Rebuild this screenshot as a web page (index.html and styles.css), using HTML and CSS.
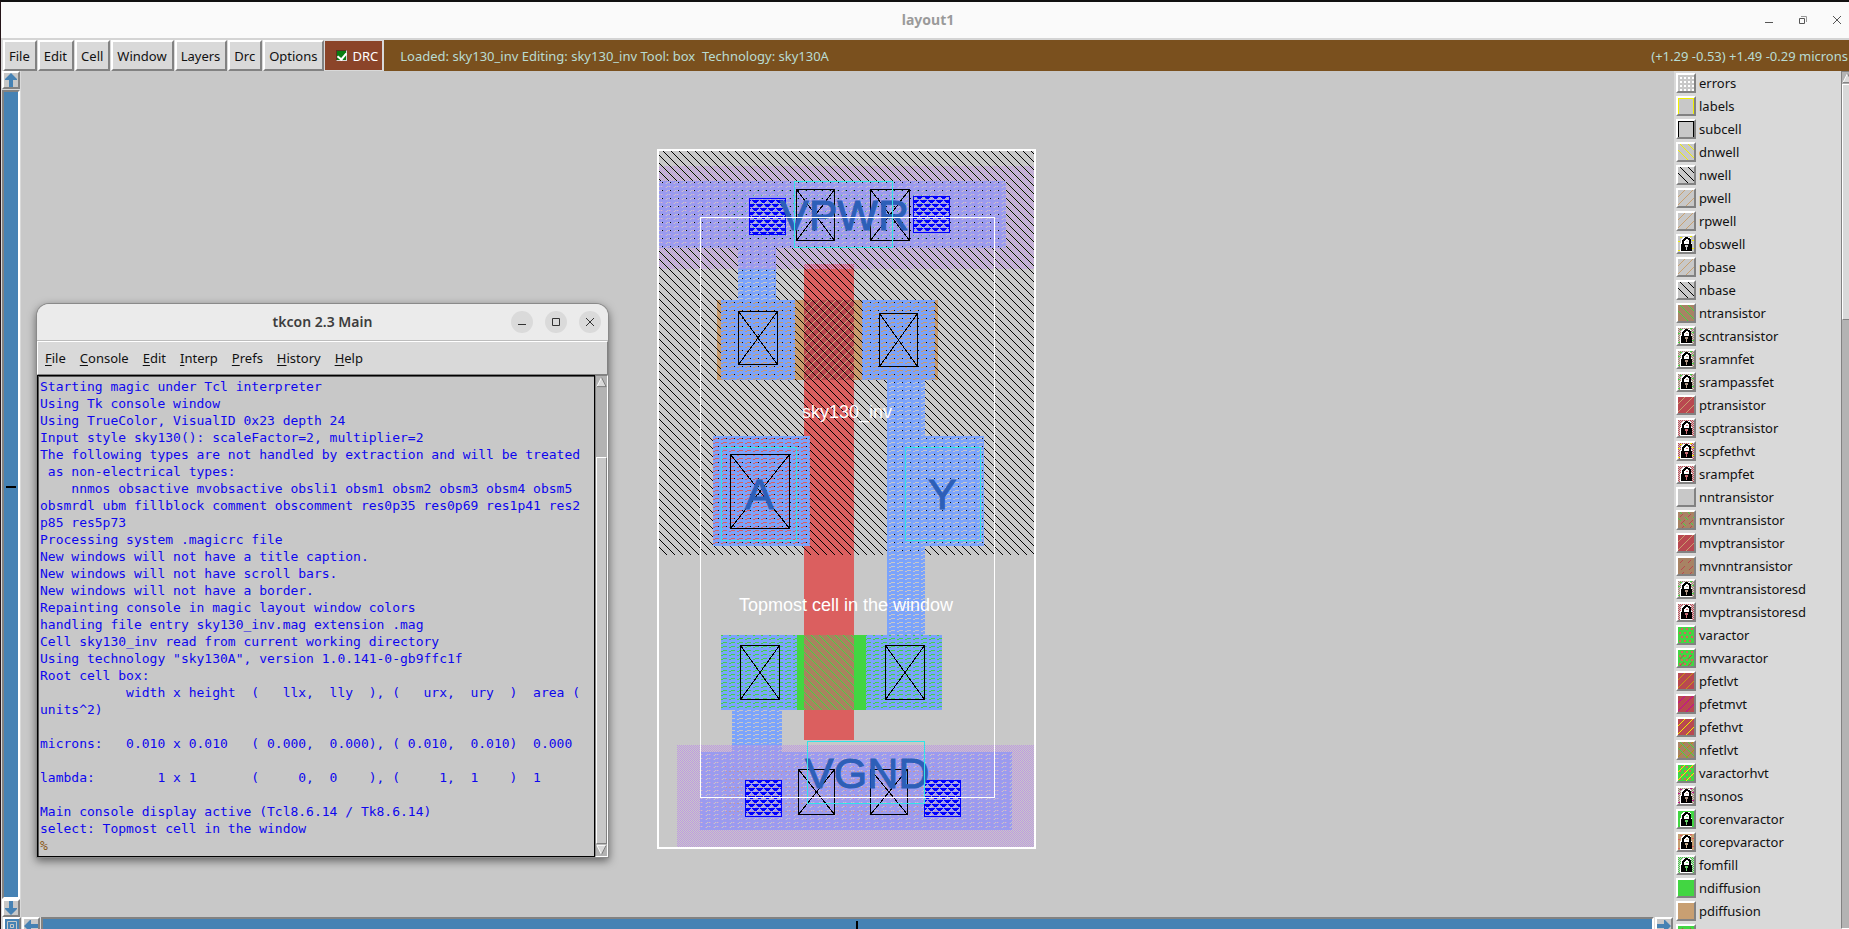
FILE: index.html
```html
<!DOCTYPE html>
<html lang="en">
<head>
<meta charset="utf-8">
<title>layout1</title>
<link rel="stylesheet" href="styles.css">
</head>
<body>
<svg class="defs" aria-hidden="true">
  <symbol id="back" viewBox="0 0 16 16"><path d="M2 0l14 14M10 0l6 6M0 6l10 10" stroke="currentColor"/></symbol>
  <symbol id="fwd" viewBox="0 0 16 16"><path d="M0 7l7-7M0 15l15-15M8 16l8-8" stroke="currentColor"/></symbol>
  <symbol id="cross" viewBox="0 0 16 16"><path d="M0 7l7-7M0 15l15-15M8 16l8-8" stroke="#b8900c"/><path d="M2 0l14 14M10 0l6 6M0 6l10 10" stroke="#42d642"/></symbol>
  <symbol id="mv" viewBox="0 0 16 16"><path d="M2 0l14 14M10 0l6 6M0 6l10 10" stroke="#42d642" stroke-dasharray="4 3"/><path d="M2 5l3-3M10 5l3-3M3 12l4-4M11 12l4-4M4 16l2-2M12 16l2-2" stroke="#b94850"/></symbol>
  <symbol id="mvn" viewBox="0 0 16 16"><path d="M2 5l3-3M10 5l3-3M3 12l4-4M11 12l4-4M4 16l2-2M12 16l2-2" stroke="#b94850"/></symbol>
  <symbol id="grid" viewBox="0 0 16 16"><path d="M2 3h14M2 7h14M2 11h14M2 15h14" stroke="#fff" stroke-width="2" stroke-dasharray="2 2"/></symbol>
  <symbol id="box" viewBox="0 0 16 16"><path d="M.5 16V.5h15V16" fill="none" stroke="currentColor"/></symbol>
  <symbol id="dots" viewBox="0 0 16 16"><path d="M3 2h13M1 6h15M3 10h13M1 14h15" stroke="#db5f5f" stroke-width="2" stroke-dasharray="2 3"/></symbol>
  <symbol id="dotsmv" viewBox="0 0 16 16"><path d="M3 2h13M1 6h15M3 10h13M1 14h15" stroke="#db5f5f" stroke-width="2" stroke-dasharray="2 3"/><path d="M2 9l4-4M10 9l4-4M2 16l4-4M10 16l4-4" stroke="#b94850"/></symbol>
  <symbol id="dotshvt" viewBox="0 0 16 16"><path d="M3 2h13M1 6h15M3 10h13M1 14h15" stroke="#db5f5f" stroke-width="2" stroke-dasharray="2 3"/><path d="M0 7l7-7M0 15l15-15M8 16l8-8" stroke="#f5f500"/></symbol>
  <symbol id="lock" viewBox="0 0 16 16">
    <path d="M0 .5h16M1 1.5h15M0 2.5h16M1 3.5h15M0 4.5h16M1 5.5h15M0 6.5h16M1 7.5h15M0 8.5h16M1 9.5h15M0 10.5h16M1 11.5h15M0 12.5h16M1 13.5h15M0 14.5h16M1 15.5h15" stroke="currentColor" stroke-dasharray="1 1"/>
    <path class="mark" d="M0 5h2M14 4h2M2 1h2M12 0h2M0 14h2M14 12h2"/>
    <path d="M2 16V7h1V3l2-2h6l2 2v4h1v9z" fill="#fff"/>
    <path d="M3 15V8h1V4l2-2h1V1h3v1h1l2 2v4h1v7zM6 8h5V5L9 3H8L6 5z" fill="#000" fill-rule="evenodd"/>
    <path d="M7 9h3v2H9v3H8v-3H7z" fill="#c8c8c8"/><path d="M7 9h3v2H9v3H8v-3H7zM8 5h2v1H8z" fill="currentColor" fill-opacity=".7"/>
  </symbol>
  <symbol id="arrow" viewBox="0 0 14 14"><path d="M7 0l6 6v1H9v7H5V7H1V6z" fill="#4682b4"/></symbol>
</svg>

<header class="titlebar">
  <h1>layout1</h1>
  <div class="winctl">
    <button aria-label="Minimize"><svg viewBox="0 0 12 12"><path d="M2 8.500h8" stroke="#555"/></svg></button>
    <button aria-label="Restore"><svg viewBox="0 0 12 12" fill="none"><path d="M4 2.500h5.500V8" stroke="#999"/><path d="M2.500 4.500h5v5h-5z" stroke="#555"/></svg></button>
    <button aria-label="Close"><svg viewBox="0 0 12 12"><path d="M2 2l8 8M10 2l-8 8" stroke="#555"/></svg></button>
  </div>
</header>

<nav class="toolbar">
  <button>File</button><button>Edit</button><button>Cell</button><button>Window</button><button>Layers</button><button>Drc</button><button>Options</button>
  <label class="drc"><input type="checkbox" checked>DRC</label>
  <p class="status"><span>Loaded: sky130_inv Editing: sky130_inv Tool: box&nbsp; Technology: sky130A</span><span>(+1.29 -0.53) +1.49 -0.29 microns</span></p>
</nav>

<main class="work">
  <div class="vbar">
    <button aria-label="Scroll up"><svg><use href="#arrow"/></svg></button>
    <div class="track"><i></i></div>
    <button aria-label="Scroll down"><svg class="down"><use href="#arrow"/></svg></button>
  </div>

  <section class="canvas">
    <svg class="cell" viewBox="657 149 379 700" width="379" height="700" role="img" aria-label="sky130_inv layout">
      <defs>
        <pattern id="hn" width="8" height="8" patternUnits="userSpaceOnUse"><path d="M0 0h1v1h1v1h1v1h1v1h1v1h1v1h1v1h1v1h-1v-1h-1v-1h-1v-1h-1v-1h-1v-1h-1v-1h-1v-1h-1z" fill="#000"/></pattern>
        <pattern id="hg" width="8" height="8" patternUnits="userSpaceOnUse"><path d="M0 0h1v1h1v1h1v1h1v1h1v1h1v1h1v1h1v1h-1v-1h-1v-1h-1v-1h-1v-1h-1v-1h-1v-1h-1v-1h-1z" fill="#42d642"/></pattern>
        <pattern id="ht" width="8" height="8" patternUnits="userSpaceOnUse"><path d="M8 0h-1v1h-1v1h-1v1h-1v1h-1v1h-1v1h-1v1h-1v1h1v-1h1v-1h1v-1h1v-1h1v-1h1v-1h1v-1h1z" fill="#d0a878"/></pattern>
        <pattern id="chk" width="2" height="2" patternUnits="userSpaceOnUse"><path d="M0 0h1v1H0zM1 1h1v1H1z" fill="#bf98e2"/></pattern>
        <pattern id="pchk" width="2" height="2" patternUnits="userSpaceOnUse"><path d="M1 0h1v1H1zM0 1h1v1H0z" fill="#db5f5f"/></pattern>
        <pattern id="li" width="8" height="4" patternUnits="userSpaceOnUse"><path d="M0 0h8v2H0zM0 2h3v1H0zM7 2h1v1H7zM0 3h1v1H0zM3 3h5v1H3z" fill="#7ba3fb"/></pattern>
        <pattern id="lm" width="8" height="4" patternUnits="userSpaceOnUse"><path d="M0 0h8v2H0zM0 2h3v1H0zM7 2h1v1H7zM0 3h1v1H0zM3 3h5v1H3z" fill="#9a9bef"/></pattern>
        <pattern id="gd" width="8" height="8" patternUnits="userSpaceOnUse"><path d="M1 3h1v1H1zM5 6h1v1H5z" fill="#55b87c"/></pattern>
        <pattern id="od" width="8" height="8" patternUnits="userSpaceOnUse"><path d="M1 3h2v1H1zM5 6h1v1H5zM6 3h1v1H6z" fill="#c89a98"/></pattern>
        <pattern id="tri" width="8" height="8" patternUnits="userSpaceOnUse"><path d="M0 0h7v1H6v1H5v1H2V2H1V1H0zM4 4h4v3H6V6H5V5H4zM0 4h3v1H2v1H1v1H0z" fill="#00f"/></pattern>
      </defs>
      <g shape-rendering="crispEdges">
        <rect x="717" y="300" width="221" height="80" fill="#c89c6e"/>
        <rect x="804" y="269" width="50" height="471" fill="#db5f5f"/>
        <rect x="713" y="436" width="97" height="110" fill="#db5f5f"/>
        <rect x="804" y="300" width="50" height="80" fill="#b94850"/>
        <rect x="804" y="300" width="50" height="80" fill="url(#ht)"/>
        <path fill="url(#chk)" d="M659 166h375v103H659zM677 745h357v102H677z"/>
        <rect x="804" y="264" width="50" height="5" fill="url(#pchk)"/>
        <rect x="659" y="151" width="375" height="404" fill="url(#hn)"/>
        <rect x="721" y="635" width="221" height="75" fill="#42d642"/>
        <rect x="804" y="635" width="50" height="75" fill="#a8835f"/>
        <rect x="804" y="635" width="50" height="75" fill="url(#hg)"/>
        <path fill="url(#li)" d="M738 269h38v31h-38zM721 300h74v80h-74zM862 300h73v80h-73zM887 380h38v56h-38zM887 436h97v110h-97zM887 546h38v89h-38zM713 436h97v110h-97zM721 635h76v75h-76zM866 635h76v75h-76zM732 710h50v35h-50z"/>
        <path fill="url(#lm)" d="M659 181h347v67H659zM738 248h38v21h-38zM732 745h50v7h-50zM700 752h312v78H700z"/>
        <rect x="728" y="190" width="204" height="52" fill="url(#gd)"/>
        <rect x="725" y="766" width="216" height="49" fill="url(#od)"/>
        <g fill="url(#tri)" stroke="#00f"><path d="M749.500 198.500h36v36h-36zM913.500 196.500h36v36h-36zM745.500 780.500h36v36h-36zM924.500 780.500h36v36h-36z"/></g>
        <g fill="none" stroke="#000">
          <path d="M796.500 189.500h38v51h-38zl38 51m0-51l-38 51"/>
          <path d="M870.500 189.500h39v51h-39zl39 51m0-51l-39 51"/>
          <path d="M738.500 311.500h39v53h-39zl39 53m0-53l-39 53"/>
          <path d="M879.500 313.500h38v53h-38zl38 53m0-53l-38 53"/>
          <path d="M730.500 454.500h59v74h-59zl59 74m0-74l-59 74"/>
          <path d="M740.500 645.500h39v54h-39zl39 54m0-54l-39 54"/>
          <path d="M885.500 645.500h39v54h-39zl39 54m0-54l-39 54"/>
          <path d="M798.500 769.500h36v45h-36zl36 45m0-45l-36 45"/>
          <path d="M870.500 769.500h37v45h-37zl37 45m0-45l-37 45"/>
        </g>
      </g>
      <g class="pin"><text x="780" y="230">VPWR</text><text x="805" y="788">VGND</text><text x="745" y="509">A</text><text x="928" y="509">Y</text></g>
      <g shape-rendering="crispEdges" fill="none">
        <path stroke="#30e4e8" d="M794.500 181.500h98v66h-98zM807.500 741.500h117v62h-117zM721.500 447.500h75v93h-75zM905.500 447.500h75v93h-75z"/>
        <rect x="700.500" y="217.500" width="294" height="580" stroke="#fff"/>
        <rect x="658" y="150" width="377" height="698" stroke="#fff" stroke-width="2"/>
      </g>
      <g class="caption"><text x="802" y="418">sky130_inv</text><text x="739" y="611">Topmost cell in the window</text></g>
    </svg>

    <section class="console">
      <header>
        <h2>tkcon 2.3 Main</h2>
        <div class="ctl">
          <button aria-label="Minimize"><svg viewBox="0 0 12 12"><path d="M2 8.500h8" stroke="#333"/></svg></button>
          <button aria-label="Maximize"><svg viewBox="0 0 12 12"><path d="M2.500 2.500h7v7h-7z" fill="none" stroke="#333"/></svg></button>
          <button aria-label="Close"><svg viewBox="0 0 12 12"><path d="M2 2l8 8M10 2l-8 8" stroke="#333"/></svg></button>
        </div>
      </header>
      <nav><button><u>F</u>ile</button><button><u>C</u>onsole</button><button><u>E</u>dit</button><button><u>I</u>nterp</button><button><u>P</u>refs</button><button><u>H</u>istory</button><button><u>H</u>elp</button></nav>
      <div class="term">
<pre>Starting magic under Tcl interpreter
Using Tk console window
Using TrueColor, VisualID 0x23 depth 24
Input style sky130(): scaleFactor=2, multiplier=2
The following types are not handled by extraction and will be treated
 as non-electrical types:
    nnmos obsactive mvobsactive obsli1 obsm1 obsm2 obsm3 obsm4 obsm5
obsmrdl ubm fillblock comment obscomment res0p35 res0p69 res1p41 res2
p85 res5p73
Processing system .magicrc file
New windows will not have a title caption.
New windows will not have scroll bars.
New windows will not have a border.
Repainting console in magic layout window colors
handling file entry sky130_inv.mag extension .mag
Cell sky130_inv read from current working directory
Using technology "sky130A", version 1.0.141-0-gb9ffc1f
Root cell box:
           width x height  (   llx,  lly  ), (   urx,  ury  )  area (
units^2)

microns:   0.010 x 0.010   ( 0.000,  0.000), ( 0.010,  0.010)  0.000

lambda:        1 x 1       (     0,  0    ), (     1,  1    )  1

Main console display active (Tcl8.6.14 / Tk8.6.14)
select: Topmost cell in the window
<span class="prompt">%</span></pre>
        <div class="tkbar">
          <svg viewBox="0 0 12 12"><path d="M6 1l5 10H1z" fill="#d9d9d9"/><path d="M1 11L6 1" stroke="#fff"/><path d="M6 1l5 10H1" fill="none" stroke="#777"/></svg>
          <div class="thumb"></div>
          <svg viewBox="0 0 12 12"><path d="M1 1h10L6 11z" fill="#d9d9d9"/><path d="M6 11L1 1h10" fill="none" stroke="#fff"/><path d="M11 1L6 11" stroke="#777"/></svg>
        </div>
      </div>
    </section>
  </section>

  <aside class="panel">
    <ul>
      <li><button><svg><use href="#grid"/></svg>errors</button></li>
      <li><button><svg class="yel"><use href="#box"/></svg>labels</button></li>
      <li><button><svg><use href="#box"/></svg>subcell</button></li>
      <li><button><svg class="yel"><use href="#back"/></svg>dnwell</button></li>
      <li><button><svg><use href="#back"/></svg>nwell</button></li>
      <li><button><svg class="tan"><use href="#fwd"/></svg>pwell</button></li>
      <li><button><svg class="tan"><use href="#fwd"/></svg>rpwell</button></li>
      <li><button><svg class="none yelmark"><use href="#lock"/></svg>obswell</button></li>
      <li><button><svg class="tan"><use href="#fwd"/></svg>pbase</button></li>
      <li><button><svg><use href="#back"/></svg>nbase</button></li>
      <li><button><svg class="onbrown grn"><use href="#back"/></svg>ntransistor</button></li>
      <li><button><svg class="brn grnmark"><use href="#lock"/></svg>scntransistor</button></li>
      <li><button><svg class="brn grnmark"><use href="#lock"/></svg>sramnfet</button></li>
      <li><button><svg class="brn grnmark"><use href="#lock"/></svg>srampassfet</button></li>
      <li><button><svg class="onred tan"><use href="#fwd"/></svg>ptransistor</button></li>
      <li><button><svg class="red"><use href="#lock"/></svg>scptransistor</button></li>
      <li><button><svg class="red yelmark"><use href="#lock"/></svg>scpfethvt</button></li>
      <li><button><svg class="red"><use href="#lock"/></svg>srampfet</button></li>
      <li><button><svg></svg>nntransistor</button></li>
      <li><button><svg class="onbrown"><use href="#mv"/></svg>mvntransistor</button></li>
      <li><button><svg class="onred tan"><use href="#fwd"/></svg>mvptransistor</button></li>
      <li><button><svg class="onbrown"><use href="#mvn"/></svg>mvnntransistor</button></li>
      <li><button><svg class="brn grnmark"><use href="#lock"/></svg>mvntransistoresd</button></li>
      <li><button><svg class="red"><use href="#lock"/></svg>mvptransistoresd</button></li>
      <li><button><svg class="ongreen"><use href="#dots"/></svg>varactor</button></li>
      <li><button><svg class="ongreen"><use href="#dotsmv"/></svg>mvvaractor</button></li>
      <li><button><svg class="onred gold"><use href="#fwd"/></svg>pfetlvt</button></li>
      <li><button><svg class="onred mag"><use href="#fwd"/></svg>pfetmvt</button></li>
      <li><button><svg class="onred yel"><use href="#fwd"/></svg>pfethvt</button></li>
      <li><button><svg class="onbrown"><use href="#cross"/></svg>nfetlvt</button></li>
      <li><button><svg class="ongreen"><use href="#dotshvt"/></svg>varactorhvt</button></li>
      <li><button><svg class="brn magmark"><use href="#lock"/></svg>nsonos</button></li>
      <li><button><svg class="ongreen grn"><use href="#lock"/></svg>corenvaractor</button></li>
      <li><button><svg class="ontan tan redmark"><use href="#lock"/></svg>corepvaractor</button></li>
      <li><button><svg class="grn"><use href="#lock"/></svg>fomfill</button></li>
      <li><button><svg class="ongreen"></svg>ndiffusion</button></li>
      <li><button><svg class="ontan"></svg>pdiffusion</button></li>
      <li><button aria-label="Next layer"><svg class="ongreen"><use href="#mvn"/></svg></button></li>
    </ul>
    <div class="tkbar">
      <svg viewBox="0 0 12 12"><path d="M6 1l5 10H1z" fill="#d9d9d9"/><path d="M1 11L6 1" stroke="#fff"/><path d="M6 1l5 10H1" fill="none" stroke="#777"/></svg>
      <div class="thumb"></div>
    </div>
  </aside>

  <div class="corner"><svg viewBox="0 0 14 14"><path d="M0 0h14v14H0z" fill="#4682b4"/><path d="M2.500 2.500h9v9h-9z" fill="none" stroke="#c8c8c8"/><path d="M5.500 5.500h3v3h-3z" fill="none" stroke="#c8c8c8"/></svg></div>
  <div class="hbar">
    <button aria-label="Scroll left"><svg class="left"><use href="#arrow"/></svg></button>
    <div class="track"><i></i></div>
    <button aria-label="Scroll right"><svg class="right"><use href="#arrow"/></svg></button>
  </div>
</main>
</body>
</html>
```
FILE: styles.css
```css
* { box-sizing: border-box; }
body {
  margin: 0;
  height: 100vh;
  overflow: hidden;
  display: flex;
  flex-direction: column;
  border-top: 2px solid #111;
  border-left: 1px solid #241418;
  background: #d9d9d9;
  font: 13px/18px "Noto Sans", "Open Sans", sans-serif;
  color: #111;
}
button { font: inherit; color: inherit; border: 0; padding: 0; margin: 0; background: none; }
.defs { position: absolute; width: 0; height: 0; }
h1, h2, p, ul, pre { margin: 0; padding: 0; }

.titlebar {
  flex: none;
  height: 38px;
  display: grid;
  grid-template-columns: 126px 1fr 120px;
  align-items: center;
  background: #fafafa;
  border-bottom: 2px solid #d4d4d4;
}
.titlebar h1 { grid-column: 2; text-align: center; font-size: 14px; line-height: 18px; font-weight: 700; color: #9a9a9a; }
.winctl { display: flex; justify-content: flex-end; gap: 22px; padding-right: 6px; }
.winctl svg { display: block; width: 12px; height: 12px; }

.toolbar { flex: none; height: 31px; display: flex; gap: 1px; padding-left: 2px; background: #d9d9d9; }
.toolbar button {
  padding: 0 5px 0 4px;
  background: #d9d9d9;
  border: 2px solid;
  border-color: #fff #828282 #828282 #fff;
}
.drc {
  display: flex;
  align-items: center;
  gap: 5px;
  padding: 0 4px 0 11px;
  background: #8b4429;
  color: #fff;
  border: 1px solid #d9d9d9;
  border-left: 0;
}
.drc input {
  appearance: none;
  margin: 0;
  width: 11px;
  height: 11px;
  background: #0a7d12;
  border: 1px solid;
  border-color: #5b3020 #d9d9d9 #d9d9d9 #5b3020;
  display: grid;
  place-items: center;
}
.drc input::after { content: ""; width: 4px; height: 7px; border: solid #fff; border-width: 0 2px 2px 0; transform: rotate(40deg); }
.status {
  flex: 1;
  display: flex;
  justify-content: space-between;
  align-items: center;
  padding: 0 1px 0 16px;
  background: #7a501e;
  color: #b9dcd2;
}

.work {
  flex: 1;
  min-height: 0;
  display: grid;
  grid-template-columns: 20px 1fr 175px;
  grid-template-rows: 1fr 12px;
  overflow: hidden;
}
.vbar { display: flex; flex-direction: column; padding-left: 1px; }
.vbar button, .hbar button, .corner {
  flex: none;
  width: 18px;
  height: 18px;
  display: grid;
  place-items: center;
  background: #c8c8c8;
  border: 2px solid;
  border-color: #fff #828282 #828282 #fff;
}
.vbar svg, .hbar svg { width: 14px; height: 14px; }
.down { transform: rotate(180deg); }
.left { transform: rotate(-90deg); }
.right { transform: rotate(90deg); }
.track { flex: 1; display: grid; place-items: center; background: #4682b4; border: 2px solid; border-color: #828282 #fff #fff #828282; }
.vbar .track { margin-top: 1px; width: 18px; padding-bottom: 16px; }
.vbar .track i { width: 10px; height: 2px; background: #000; }
.hbar { min-width: 0; display: flex; gap: 1px; padding: 0 1px; overflow: hidden; }
.hbar .track { height: 18px; padding-left: 18px; }
.hbar .track i { width: 2px; height: 10px; background: #000; }
.corner { margin-left: 2px; }
.corner svg { width: 14px; height: 14px; }

.canvas { position: relative; min-width: 0; overflow: hidden; background: #c8c8c8; }
.cell { position: absolute; left: 636px; top: 78px; }
.pin text { font: 43px "Liberation Sans", Arial, sans-serif; fill: #2d5fb8; stroke: #2d5fb8; }
.caption text { font: 18px "Liberation Sans", Arial, sans-serif; fill: #fff; }

.console {
  position: absolute;
  left: 16px;
  top: 233px;
  width: 571px;
  background: #d9d9d9;
  border-radius: 12px 12px 0 0;
  box-shadow: 0 0 0 1px #8a8a8a, 0 3px 8px 1px rgba(0, 0, 0, .5);
}
.console header {
  height: 37px;
  display: grid;
  grid-template-columns: 110px 1fr 110px;
  align-items: center;
  background: #ebebeb;
  border-radius: 12px 12px 0 0;
  border-bottom: 1px solid #bdbdbd;
}
.console h2 { grid-column: 2; text-align: center; font-size: 14px; line-height: 18px; font-weight: 600; color: #3d3d3d; }
.ctl { display: flex; justify-content: flex-end; gap: 12px; padding-right: 7px; }
.ctl button { width: 22px; height: 22px; border-radius: 50%; background: #dadada; display: grid; place-items: center; }
.ctl svg { width: 12px; height: 12px; }
.console nav { height: 34px; display: flex; gap: 14px; align-items: center; padding-left: 7px; border: 1px solid; border-color: #fff #828282 #828282 #fff; }
u { text-underline-offset: 2px; }
.term { display: flex; }
pre {
  flex: 1;
  min-width: 0;
  overflow: hidden;
  padding: 2px 1px 2px 2px;
  border: 1px solid #000;
  box-shadow: inset 1px 1px #555;
  background: #c8c8c8;
  color: #0d06ee;
  font: 13px/17px "DejaVu Sans Mono", monospace;
}
.prompt { color: #8b5a1a; }
.tkbar { display: flex; flex-direction: column; width: 13px; background: #b3b3b3; border: 1px solid; border-color: #828282 #fff #fff #828282; }
.tkbar svg { flex: none; width: 11px; height: 12px; }
.thumb { background: #d9d9d9; border: 1px solid; border-color: #fff #828282 #828282 #fff; }
.term .thumb { flex: 1; margin-top: 69px; background: #c8c8c8; }

.panel { grid-column: 3; grid-row: 1 / 3; display: flex; min-height: 0; overflow: hidden; padding-left: 2px; }
.panel ul { flex: 1; list-style: none; }
.panel li { height: 23px; }
.panel li button { display: flex; align-items: center; gap: 3px; height: 23px; }
.panel li svg {
  width: 20px;
  height: 20px;
  background: #c8c8c8;
  border: 2px solid;
  border-color: #fff #828282 #828282 #fff;
  shape-rendering: crispEdges;
  color: #000;
}
.panel .tkbar { width: 8px; overflow: hidden; border-right: 0; }
.panel .thumb { height: 236px; width: 12px; }
.panel li .yel { color: #f0f000; }
.panel li .tan { color: #c8a070; }
.panel li .grn { color: #42d642; }
.panel li .red { color: #c84650; }
.panel li .brn { color: #a8836a; }
.panel li .gold { color: #c89a10; }
.panel li .mag { color: #c800a0; }
.panel li .none { color: #c8c8c8; }
.panel li .onbrown { background: #a88364; }
.panel li .onred { background: #b94850; }
.panel li .ongreen { background: #42d642; }
.panel li .ontan { background: #c89f72; }
.yelmark { stroke: #f0f000; }
.grnmark { stroke: #42d642; }
.magmark { stroke: #c0108c; }
.redmark { stroke: #db5f5f; }
.mark ~ path { stroke: none; }
```
